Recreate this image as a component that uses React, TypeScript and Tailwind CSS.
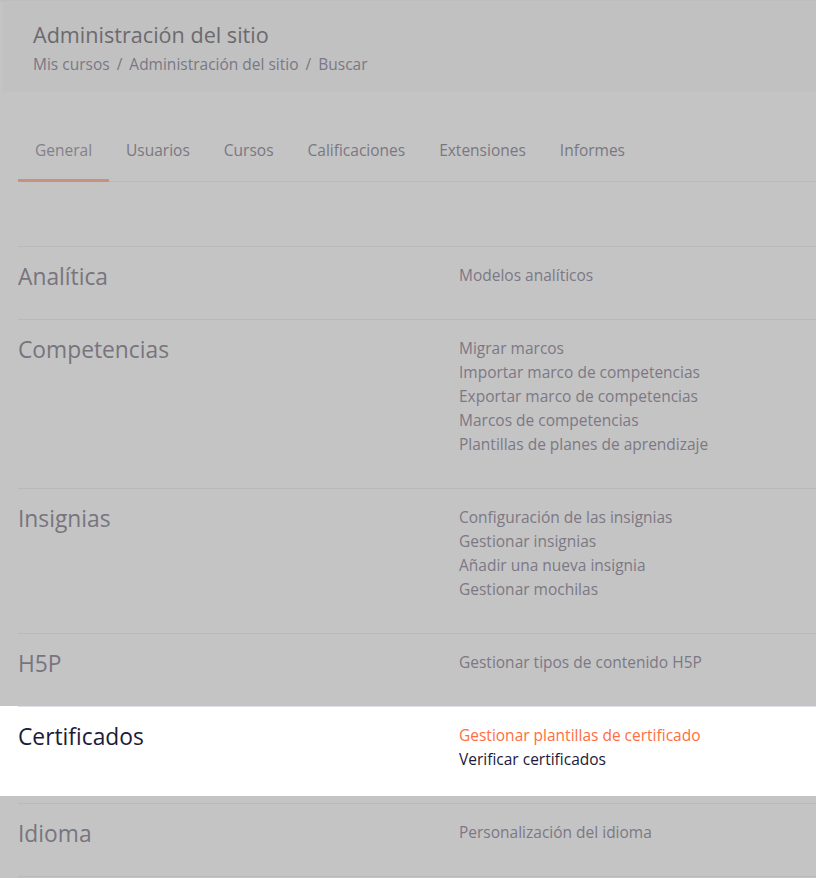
import React from "react";

const rows: { title: string; links: string[] }[] = [
  { title: "Analítica", links: ["Modelos analíticos"] },
  {
    title: "Competencias",
    links: [
      "Migrar marcos",
      "Importar marco de competencias",
      "Exportar marco de competencias",
      "Marcos de competencias",
      "Plantillas de planes de aprendizaje",
    ],
  },
  {
    title: "Insignias",
    links: [
      "Configuración de las insignias",
      "Gestionar insignias",
      "Añadir una nueva insignia",
      "Gestionar mochilas",
    ],
  },
  { title: "H5P", links: ["Gestionar tipos de contenido H5P"] },
];

const tabs = ["General", "Usuarios", "Cursos", "Calificaciones", "Extensiones", "Informes"];

function Row({ title, links }: { title: string; links: string[] }) {
  return (
    <div className="flex items-start border-t border-[#b9b9b9] pt-4 pb-8">
      <div className="w-[441px] shrink-0 text-[22.8px] leading-[28px] -mb-1 text-[#78747e]">{title}</div>
      <div className="flex flex-col text-[15.5px] leading-[24px] text-[#7c7884]">
        {links.map((l) => (
          <span key={l}>{l}</span>
        ))}
      </div>
    </div>
  );
}

export default function App() {
  return (
    <div
      className="w-[816px] h-[878px] overflow-hidden bg-[#c4c4c4] border-t-2 border-[#bebebe]"
      style={{ fontFamily: "'Open Sans', 'Noto Sans', sans-serif" }}
    >
      <div className="ml-[3px] mt-[1px] h-[89px] bg-[#c1c1c1] pl-[30px] pt-[18px]">
        <div className="text-[21.6px] leading-[28px] font-medium text-[#6c6a6e]">Administración del sitio</div>
        <div className="mt-[5px] flex items-center text-[15.5px] leading-[20px] text-[#7b7785]">
          <span>Mis cursos</span>
          <span className="mx-[7px]">/</span>
          <span>Administración del sitio</span>
          <span className="mx-[7px]">/</span>
          <span>Buscar</span>
        </div>
      </div>

      <div className="ml-[18px] mt-[28px] flex border-b border-[#b9b9b9]">
        {tabs.map((t, i) => (
          <div
            key={t}
            className={
              "px-[17px] pt-[20px] pb-[19px] text-[15.5px] leading-[20px] -mb-px border-b-[3px] " +
              (i === 0 ? "border-[#c9907f] text-[#838089]" : "border-transparent text-[#7a7782]")
            }
          >
            {t}
          </div>
        ))}
      </div>

      <div className="ml-[18px] mt-[64px]">
        {rows.map((r) => (
          <Row key={r.title} {...r} />
        ))}
      </div>

      <div className="relative">
        <div className="absolute left-0 top-0 w-[816px] h-[90px] bg-white" />
        <div className="relative ml-[18px] flex items-start border-t border-[#dee2e6] pt-4 pb-8">
          <div className="w-[441px] shrink-0 text-[22.8px] leading-[28px] -mb-1 text-[#1d1b3a]">Certificados</div>
          <div className="flex flex-col text-[15.5px] leading-[24px]">
            <span className="text-[#ff6e40]">Gestionar plantillas de certificado</span>
            <span className="text-[#1a1a3a]">Verificar certificados</span>
          </div>
        </div>
        <div className="ml-[18px]">
          <div className="flex items-start border-t border-b border-[#b9b9b9] pt-4 pb-8">
            <div className="w-[441px] shrink-0 text-[22.8px] leading-[28px] -mb-1 text-[#78747e]">Idioma</div>
            <div className="flex flex-col text-[15.5px] leading-[24px] text-[#7c7884]">
              <span>Personalización del idioma</span>
            </div>
          </div>
        </div>
      </div>
    </div>
  );
}
